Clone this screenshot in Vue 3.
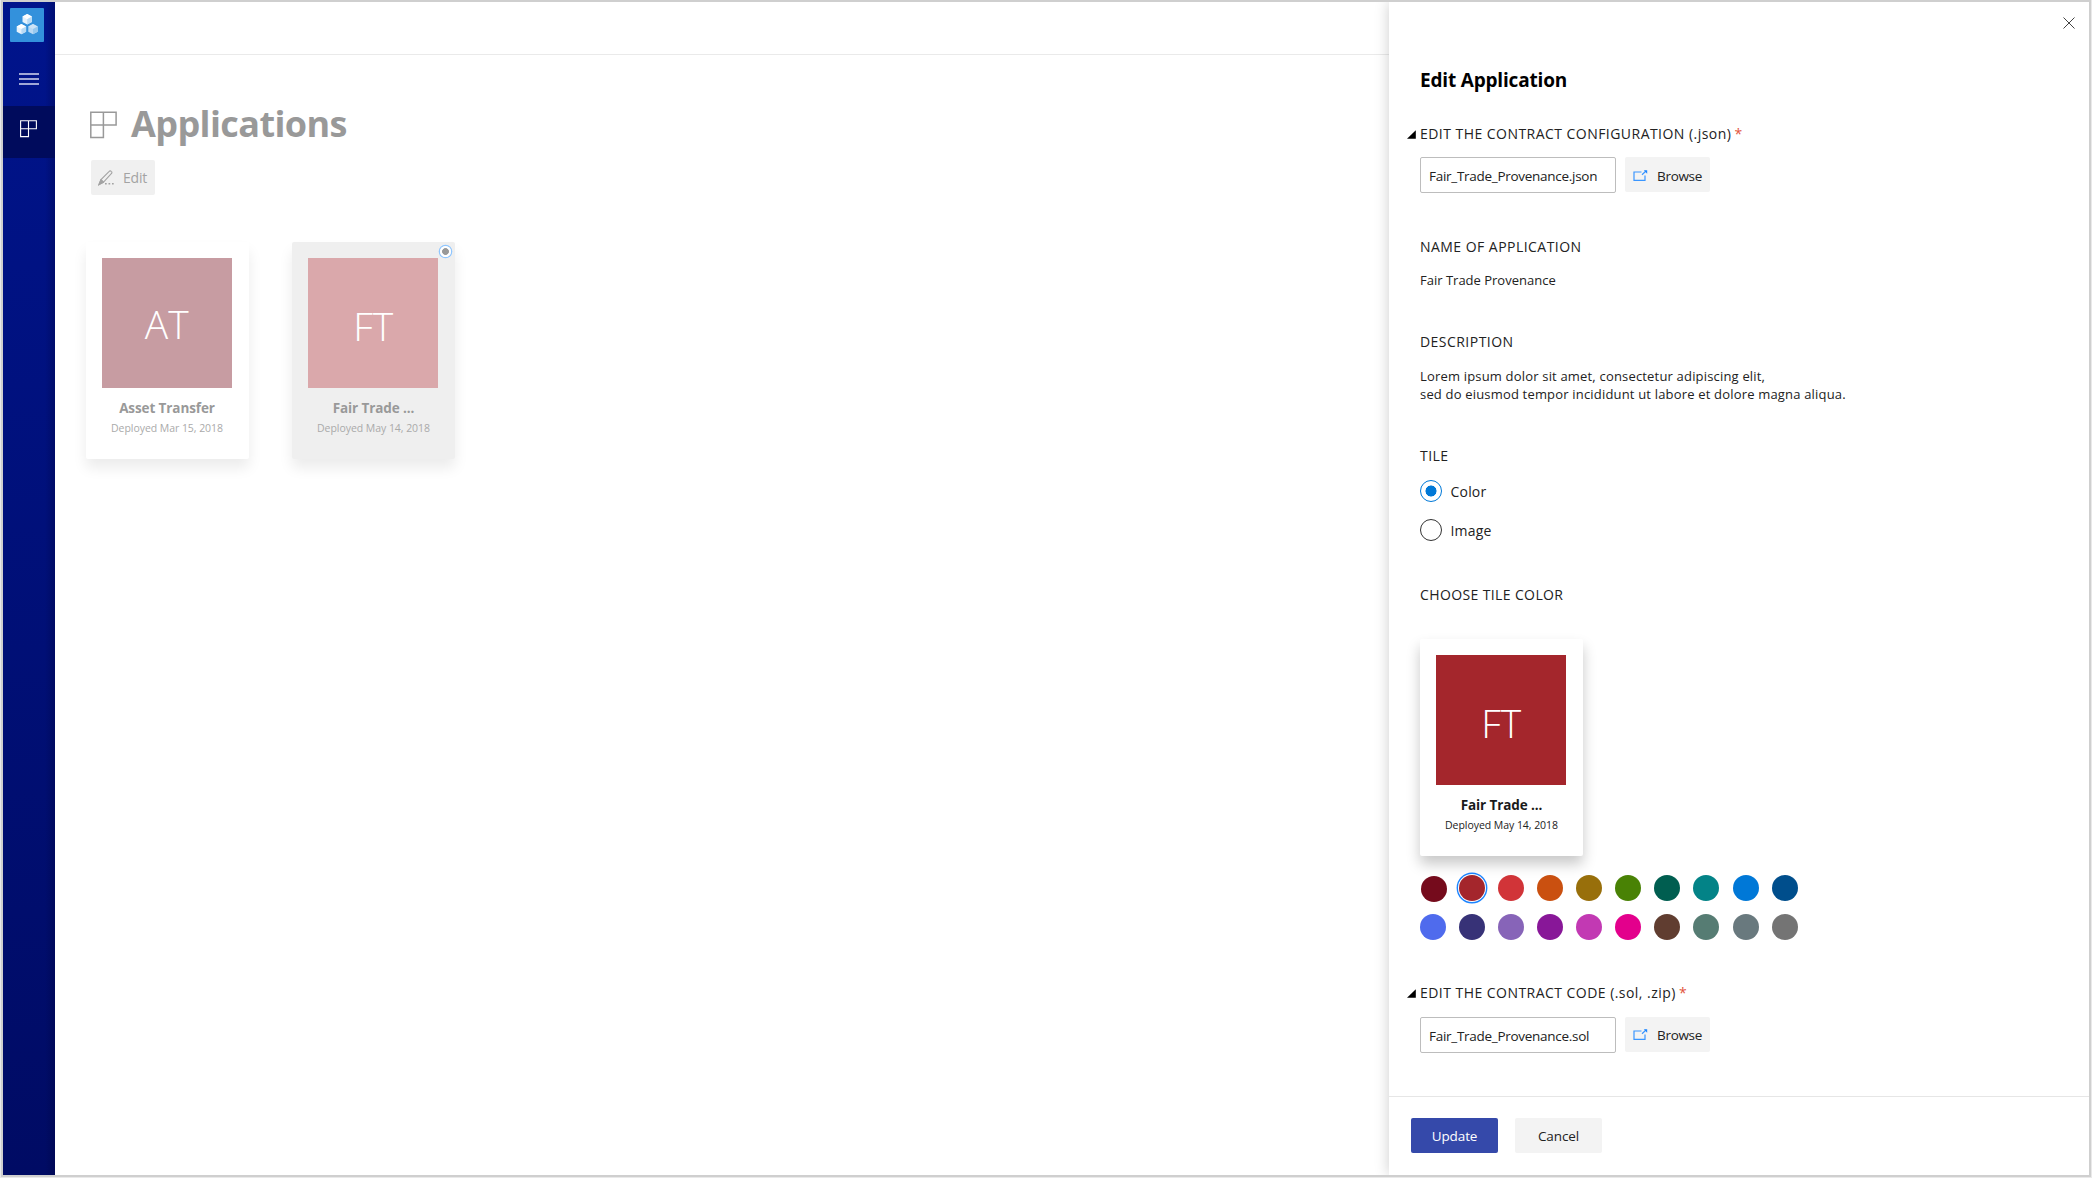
<script setup>
import { ref } from 'vue'

const apps = [
  { id: 1, initials: 'AT', name: 'Asset Transfer', date: 'Deployed Mar 15, 2018', theme: 'maroon' },
  { id: 2, initials: 'FT', name: 'Fair Trade ...', date: 'Deployed May 14, 2018', theme: 'red' }
]

const colors = [
  '#750b1c', '#a4262c', '#d13438', '#ca5010', '#986f0b',
  '#498205', '#005e50', '#038387', '#0078d7', '#004e8c',
  '#4f6bed', '#373277', '#8764b8', '#881798', '#c239b3',
  '#e3008c', '#603d30', '#567c73', '#69797e', '#747474'
]

const selectedApp = ref(2)
const tileType = ref('color')
const tileColor = ref('#a4262c')
</script>

<template>
  <div class="window">
    <nav class="sidebar">
      <div class="logo">
        <svg width="34" height="34" viewBox="0 0 34 34">
          <g v-for="(c, i) in [[17.2, 11.3], [11.4, 21.1], [23, 21.1]]" :key="i" :transform="`translate(${c[0]} ${c[1]})`" :opacity="i === 2 ? 0.75 : 1">
            <path d="M0-5.2 4.7-2.7V2.6L0 5.2-4.7 2.6V-2.7Z" fill="#e6f2fc" />
            <path d="M0-5.2 4.7-2.7 0-.1-4.7-2.7Z" fill="#fff" />
            <path d="M0-.1 4.7-2.7V2.6L0 5.2Z" fill="#b9dbf5" />
          </g>
        </svg>
      </div>
      <button class="nav-btn menu">
        <svg width="20" height="14" viewBox="0 0 20 14"><path d="M0 2h20M0 7h20M0 12h20" stroke="#d5d9f0" stroke-width="1.4" /></svg>
      </button>
      <button class="nav-btn active">
        <svg width="18" height="18" viewBox="0 0 18 18" fill="none" stroke="#fff" stroke-width="1.1"><path d="M.6.8h15.8v7.9H.6zM.6.8h7.9v15.8H.6z" /></svg>
      </button>
    </nav>

    <main class="content">
      <header class="topbar"></header>
      <div class="page">
        <div class="heading">
          <svg width="28" height="28" viewBox="0 0 28 28" fill="none" stroke="#999" stroke-width="1.5"><path d="M.8 1.2h25.3v12.9H.8zM.8 1.2h12.6v25.3H.8z" /></svg>
          <h1>Applications</h1>
        </div>
        <button class="edit-btn">
          <svg width="17" height="16" viewBox="0 0 17 16" fill="none" stroke="#a3a3a3" stroke-width="1.1">
            <path d="M1 14.5 3 9.6 11.2 1.3a1.3 1.3 0 0 1 2 0l.3.3a1.3 1.3 0 0 1 0 1.9L5.6 12Z" />
            <path d="m3 9.6 2.6 2.6" />
            <path d="M1 14.5 2.8 10l2.5 2.3Z" fill="#a3a3a3" />
            <path d="M7 13.7h1.7M10.5 13.7h1.7M14 13.7h1.7" stroke-width="1.5" />
          </svg>
          <span>Edit</span>
        </button>
        <div class="cards">
          <div v-for="app in apps" :key="app.id" class="card faded" :class="{ selected: app.id === selectedApp }">
            <div class="tile" :class="app.theme">{{ app.initials }}</div>
            <div class="card-name">{{ app.name }}</div>
            <div class="card-date">{{ app.date }}</div>
            <span v-if="app.id === selectedApp" class="badge"></span>
          </div>
        </div>
      </div>
    </main>

    <aside class="panel">
      <button class="close">
        <svg width="12" height="12" viewBox="0 0 12 12"><path d="M.5.5l11 11M11.5.5l-11 11" stroke="#444" stroke-width="1" /></svg>
      </button>
      <div class="panel-body">
        <h2>Edit Application</h2>

        <div class="label config">
          <svg class="caret" width="9" height="9" viewBox="0 0 9 9"><path d="M8.8.3v8.4H0z" fill="#000" /></svg>
          EDIT THE CONTRACT CONFIGURATION (.json) <b>*</b>
        </div>
        <div class="file-row">
          <div class="file-input">Fair_Trade_Provenance.json</div>
          <button class="browse">
            <svg width="15" height="12" viewBox="0 0 15 12" fill="none" stroke="#3a96ff" stroke-width="1.2"><path d="M8.5 2H1v8.4h11V5.5M9 4.8 13 1" /><path d="M10.8.3h3.4v3.4z" fill="#1b84ff" stroke="none" /></svg>
            <span>Browse</span>
          </button>
        </div>

        <div class="label name">NAME OF APPLICATION</div>
        <div class="value">Fair Trade Provenance</div>

        <div class="label">DESCRIPTION</div>
        <div class="value desc-value">Lorem ipsum dolor sit amet, consectetur adipiscing elit,<br />sed do eiusmod tempor incididunt ut labore et dolore magna aliqua.</div>

        <div class="label">TILE</div>
        <div class="radios">
          <label class="radio" :class="{ checked: tileType === 'color' }" @click="tileType = 'color'"><i></i><span>Color</span></label>
          <label class="radio" :class="{ checked: tileType === 'image' }" @click="tileType = 'image'"><i></i><span>Image</span></label>
        </div>

        <div class="label choose">CHOOSE TILE COLOR</div>
        <div class="card preview">
          <div class="tile" :style="{ background: tileColor }">FT</div>
          <div class="card-name">Fair Trade ...</div>
          <div class="card-date">Deployed May 14, 2018</div>
        </div>
        <div class="swatches">
          <span v-for="color in colors" :key="color" class="swatch" :class="{ picked: color === tileColor }" :style="{ background: color }" @click="tileColor = color"></span>
        </div>

        <div class="label">
          <svg class="caret" width="9" height="9" viewBox="0 0 9 9"><path d="M8.8.3v8.4H0z" fill="#000" /></svg>
          EDIT THE CONTRACT CODE (.sol, .zip) <b>*</b>
        </div>
        <div class="file-row second">
          <div class="file-input">Fair_Trade_Provenance.sol</div>
          <button class="browse">
            <svg width="15" height="12" viewBox="0 0 15 12" fill="none" stroke="#3a96ff" stroke-width="1.2"><path d="M8.5 2H1v8.4h11V5.5M9 4.8 13 1" /><path d="M10.8.3h3.4v3.4z" fill="#1b84ff" stroke="none" /></svg>
            <span>Browse</span>
          </button>
        </div>
      </div>
      <footer class="panel-footer">
        <button class="btn primary">Update</button>
        <button class="btn">Cancel</button>
      </footer>
    </aside>
  </div>
</template>

<style>
body {
  margin: 0;
  background: #e9e9e9;
}
</style>

<style scoped>
.window {
  box-sizing: border-box;
  width: 2090px;
  height: 1177px;
  margin-left: 1px;
  border: 2px solid #cfcfcf;
  display: flex;
  background: #fff;
  overflow: hidden;
  font-family: "Open Sans", "Noto Sans", sans-serif;
  font-size: 14px;
  color: #222;
}

button {
  border: none;
  padding: 0;
  font: inherit;
  color: inherit;
  background: none;
}

svg {
  display: block;
  flex: none;
}

/* sidebar */
.sidebar {
  width: 52px;
  flex: none;
  background: linear-gradient(90deg, transparent 42px, rgba(0, 0, 50, 0.28)), linear-gradient(#00148c, #000b64);
  display: flex;
  flex-direction: column;
}

.logo {
  width: 34px;
  height: 34px;
  margin: 6px 0 0 7.4px;
  border-radius: 1px;
  background: #3391dc;
}

.nav-btn {
  height: 52px;
  display: flex;
  align-items: center;
  padding-left: 17px;
}

.nav-btn.menu {
  margin-top: 11px;
  padding-left: 16px;
}

.nav-btn.active {
  box-sizing: border-box;
  margin-top: 1px;
  padding-bottom: 6px;
  background: #000b5c;
}

/* main area */
.content {
  flex: 1;
  min-width: 0;
}

.topbar {
  height: 52px;
  border-bottom: 1px solid #eaeaea;
}

.page {
  padding: 46px 0 0 31px;
}

.heading {
  display: flex;
  align-items: center;
  gap: 13px;
  height: 48px;
  margin-left: 4px;
}

h1 {
  margin: -2px 0 0;
  font-size: 36px;
  line-height: 48px;
  font-weight: 700;
  letter-spacing: -0.6px;
  color: #999;
}

.edit-btn {
  width: 64px;
  height: 35px;
  margin: 11px 0 0 5px;
  padding-left: 7px;
  display: flex;
  align-items: center;
  gap: 8px;
  background: #f0f0f0;
  border-radius: 2px;
  color: #a3a3a3;
  letter-spacing: -0.2px;
}

.cards {
  display: flex;
  gap: 43.5px;
  margin: 47px 0 0 -0.5px;
}

.card {
  position: relative;
  box-sizing: border-box;
  width: 163px;
  height: 217px;
  padding-top: 16px;
  border-radius: 2px;
  text-align: center;
  box-shadow: 0 8px 14px rgba(0, 0, 0, 0.22);
}

.card.faded {
  color: #999;
  box-shadow: 0 9px 14px rgba(0, 0, 0, 0.08);
}

.card.selected {
  background: #efefef;
}

.tile {
  width: 130.4px;
  height: 130.4px;
  margin-left: 16px;
  color: #fff;
  font-size: 39px;
  font-weight: 300;
  line-height: 136px;
}

.tile.maroon {
  background: #c79ca2;
  line-height: 132px;
}

.tile.red {
  background: #daa8ab;
}

.card-name {
  margin-top: 9.6px;
  font-weight: 700;
  font-size: 13.5px;
  line-height: 20px;
  letter-spacing: -0.1px;
}

.preview .card-name {
  color: #1a1a1a;
}

.card-date {
  font-size: 10.5px;
  line-height: 16px;
  letter-spacing: -0.05px;
  margin-top: 2px;
}

.faded .card-date {
  color: #aaa;
}

.badge {
  position: absolute;
  top: 4px;
  right: 4px;
  width: 7px;
  height: 7px;
  border: 2px solid #fff;
  border-radius: 50%;
  background: radial-gradient(circle, #999 3.2px, #fff 3.8px);
  box-shadow: 0 0 0 1.3px #8fc6ff;
}

/* edit panel */
.panel {
  position: relative;
  width: 700px;
  flex: none;
  display: flex;
  flex-direction: column;
  background: #fff;
  box-shadow: 0 0 14px rgba(0, 0, 0, 0.2);
}

.close {
  position: absolute;
  top: 15px;
  right: 14px;
}

.panel-body {
  flex: 1;
  padding: 64px 0 0 31px;
}

h2 {
  margin: 0;
  font-size: 19px;
  line-height: 28px;
  font-weight: 700;
  letter-spacing: -0.18px;
  color: #000;
}

.label {
  position: relative;
  line-height: 20px;
  margin-top: 43px;
  letter-spacing: 0.46px;
  white-space: nowrap;
}

.label b {
  margin-left: -1px;
  color: #e2533b;
  font-weight: 400;
}

.label.config {
  margin-top: 30px;
}

.label.name,
.label.choose {
  margin-top: 44px;
}

.label.choose {
  letter-spacing: 0.38px;
}

.caret {
  position: absolute;
  left: -13px;
  top: 6px;
}

.file-row {
  display: flex;
  gap: 9px;
  margin-top: 13px;
}

.file-row.second {
  margin-top: 14px;
}

.file-input {
  box-sizing: border-box;
  width: 196px;
  height: 36px;
  padding-left: 8px;
  border: 1px solid #bdbdbd;
  border-radius: 2px;
  font-size: 13.5px;
  line-height: 36px;
  letter-spacing: -0.28px;
}

.browse {
  box-sizing: border-box;
  width: 85px;
  height: 35px;
  padding: 2px 0 0 8px;
  display: flex;
  align-items: center;
  gap: 9px;
  background: #f3f3f3;
  border-radius: 2px;
  font-size: 13.5px;
  letter-spacing: -0.3px;
}

.value {
  margin-top: 14px;
  font-size: 13px;
  line-height: 18px;
  white-space: nowrap;
}

.desc-value {
  margin-top: 15px;
  letter-spacing: 0.18px;
}

.radios {
  margin-top: 14px;
  display: flex;
  flex-direction: column;
  gap: 17px;
}

.radio {
  display: flex;
  align-items: center;
  gap: 8.5px;
  height: 22px;
  letter-spacing: 0.2px;
}

.radio i {
  box-sizing: border-box;
  width: 22px;
  height: 22px;
  border: 1.4px solid #333;
  border-radius: 50%;
}

.radio.checked i {
  border-color: #0078d7;
  background: radial-gradient(circle, #0078d7 5.2px, transparent 5.8px);
}

.preview {
  margin-top: 34px;
}

.swatches {
  display: grid;
  grid-template-columns: repeat(10, 26px);
  gap: 13px 13.1px;
  margin: 18.6px 0 0 -0.2px;
}

.swatch {
  height: 26px;
  border-radius: 50%;
}

.swatch:first-child {
  margin: 1px -1px -1px 1px;
}

.swatch.picked {
  box-shadow: 0 0 0 1px #fff, 0 0 0 2.4px #1b84ff;
}

.swatches + .label {
  margin-top: 43.4px;
}

.panel-footer {
  height: 79px;
  flex: none;
  box-sizing: border-box;
  border-top: 1px solid #e6e6e6;
  padding: 21px 0 0 22px;
  display: flex;
  gap: 17px;
}

.btn {
  width: 87px;
  height: 35px;
  background: #f3f3f3;
  border-radius: 2px;
  font-size: 13.5px;
  letter-spacing: -0.1px;
}

.btn.primary {
  background: #3549aa;
  color: #fff;
}
</style>
